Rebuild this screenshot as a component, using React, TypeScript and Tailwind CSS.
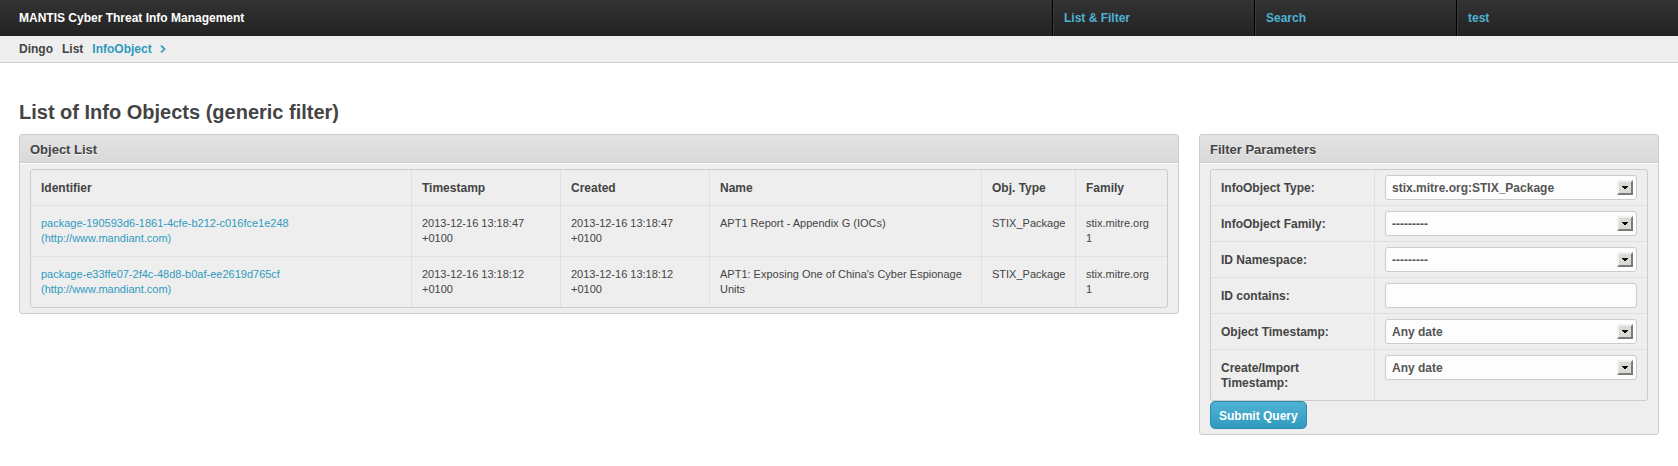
import type { ReactNode } from 'react';

const navItems = ['List & Filter', 'Search', 'test'];

const objects = [
  {
    id: 'package-190593d6-1861-4cfe-b212-c016fce1e248',
    namespace: '(http://www.mandiant.com)',
    timestamp: '2013-12-16 13:18:47 +0100',
    created: '2013-12-16 13:18:47 +0100',
    name: 'APT1 Report - Appendix G (IOCs)',
    type: 'STIX_Package',
    family: 'stix.mitre.org 1',
  },
  {
    id: 'package-e33ffe07-2f4c-48d8-b0af-ee2619d765cf',
    namespace: '(http://www.mandiant.com)',
    timestamp: '2013-12-16 13:18:12 +0100',
    created: '2013-12-16 13:18:12 +0100',
    name: "APT1: Exposing One of China's Cyber Espionage Units",
    type: 'STIX_Package',
    family: 'stix.mitre.org 1',
  },
];

const filters = [
  { id: 'type', label: 'InfoObject Type:', value: 'stix.mitre.org:STIX_Package' },
  { id: 'family', label: 'InfoObject Family:', value: '---------' },
  { id: 'namespace', label: 'ID Namespace:', value: '---------' },
  { id: 'contains', label: 'ID contains:', value: null },
  { id: 'timestamp', label: 'Object Timestamp:', value: 'Any date' },
  { id: 'created', label: 'Create/Import Timestamp:', value: 'Any date' },
];

function Panel({ title, children }: { title: string; children: ReactNode }) {
  return (
    <section className="min-w-0 overflow-hidden rounded-[3px] border border-[#ccc] bg-[#eee]">
      <h2 className="border-b border-[#ccc] bg-linear-to-b from-[#e3e3e3] to-[#d9d9d9] px-2.5 pt-[7px] pb-1 text-[13px] leading-4 font-bold [text-shadow:0_1px_0_#f5f5f5]">
        {title}
      </h2>
      <div className="border-t border-white px-2.5 py-[5px]">{children}</div>
    </section>
  );
}

function SelectField({ id, value }: { id: string; value: string }) {
  return (
    <div className="relative">
      <select
        id={id}
        className="block h-[25px] w-full appearance-none rounded-[3px] border border-[#ccc] bg-[#fdfdfd] pr-6 pl-1.5 text-xs font-bold text-[#555] outline-none"
      >
        <option>{value}</option>
      </select>
      <span className="pointer-events-none absolute top-[5px] right-1 flex h-[15px] w-4 items-center justify-center border-2 border-t-[#f1f0ee] border-r-[#7b7a77] border-b-[#7b7a77] border-l-[#f1f0ee] bg-[#dcdad5]">
        <svg width="6" height="4" viewBox="0 0 6 4" shapeRendering="crispEdges" aria-hidden="true">
          <path d="M0 0h6v1H5v1H4v1H2V2H1V1H0z" fill="#000" />
        </svg>
      </span>
    </div>
  );
}

const th = 'border-r border-b border-[#e0e0e0] px-2.5 pt-[11px] pb-[9px] text-left text-xs leading-[15px] font-bold last:border-r-0';
const td = 'border-r border-[#e0e0e0] px-2.5 py-2.5 align-top last:border-r-0 group-not-last:border-b';

export default function App() {
  return (
    <div className="font-['Liberation_Sans',Arial,sans-serif] text-[#444]">
      <header className="flex h-9 items-stretch justify-between bg-linear-to-b from-[#333] to-[#222] pr-5 pl-[19px] text-xs leading-9 font-bold">
        <a href="#home" className="text-white">
          MANTIS Cyber Threat Info Management
        </a>
        <nav className="flex">
          {navItems.map((item) => (
            <a key={item} href="#menu" className="w-[202px] border-l border-black text-[#4fb2d3]">
              <span className="block border-l border-[#3a3a3a] px-2.5">{item}</span>
            </a>
          ))}
        </nav>
      </header>

      <nav className="flex h-[27px] items-center gap-[9px] border-b border-[#ccc] bg-[#eee] px-[19px] text-xs font-bold">
        <a href="#dingo">Dingo</a>
        <a href="#list">List</a>
        <a href="#infoobject" className="flex items-center gap-2 text-[#309bbf]">
          InfoObject
          <svg width="6" height="8" viewBox="0 0 6 8" fill="none" stroke="#309bbf" strokeWidth="1.7" aria-hidden="true">
            <path d="M1 0.6L4.6 4L1 7.4" />
          </svg>
        </a>
      </nav>

      <main className="px-[19px] pt-[37px]">
        <h1 className="mb-[9px] text-xl leading-[25px] font-bold">List of Info Objects (generic filter)</h1>

        <div className="grid grid-cols-[1160fr_460fr] items-start gap-5">
          <Panel title="Object List">
            <div className="overflow-hidden rounded-[3px] border border-[#ccc]">
              <table className="w-full table-fixed border-separate border-spacing-0 text-[11px] leading-[15px]">
                <colgroup>
                  <col />
                  <col className="w-[149px]" />
                  <col className="w-[149px]" />
                  <col className="w-[272px]" />
                  <col className="w-[94px]" />
                  <col className="w-[91px]" />
                </colgroup>
                <thead>
                  <tr>
                    <th className={th}>Identifier</th>
                    <th className={th}>Timestamp</th>
                    <th className={th}>Created</th>
                    <th className={th}>Name</th>
                    <th className={th}>Obj. Type</th>
                    <th className={th}>Family</th>
                  </tr>
                </thead>
                <tbody>
                  {objects.map((o) => (
                    <tr key={o.id} className="group">
                      <td className={td}>
                        <a href="#object" className="text-[#309bbf]">
                          {o.id}
                          <br />
                          {o.namespace}
                        </a>
                      </td>
                      <td className={td}>{o.timestamp}</td>
                      <td className={td}>{o.created}</td>
                      <td className={td}>{o.name}</td>
                      <td className={td}>{o.type}</td>
                      <td className={td}>{o.family}</td>
                    </tr>
                  ))}
                </tbody>
              </table>
            </div>
          </Panel>

          <Panel title="Filter Parameters">
            <form>
              <div className="rounded-[3px] border border-[#ccc] text-xs leading-[15px]">
                {filters.map((f) => (
                  <div key={f.id} className="flex border-[#e0e0e0] not-last:border-b">
                    <label
                      htmlFor={f.id}
                      className="w-[164px] shrink-0 border-r border-[#e0e0e0] px-2.5 pt-[11px] pb-[9px] font-bold"
                    >
                      {f.label}
                    </label>
                    <div className="min-w-0 grow px-2.5 py-[5px]">
                      {f.value === null ? (
                        <input
                          id={f.id}
                          type="text"
                          className="block h-[25px] w-full rounded-[3px] border border-[#ccc] bg-[#fdfdfd] px-1.5 font-bold text-[#555] outline-none"
                        />
                      ) : (
                        <SelectField id={f.id} value={f.value} />
                      )}
                    </div>
                  </div>
                ))}
              </div>
              <button
                type="button"
                className="block h-7 rounded-[5px] border border-[#2b8aab] bg-linear-to-b from-[#4fb2d3] to-[#309bbf] px-2 pt-px text-xs font-bold text-white"
              >
                Submit Query
              </button>
            </form>
          </Panel>
        </div>
      </main>
    </div>
  );
}
